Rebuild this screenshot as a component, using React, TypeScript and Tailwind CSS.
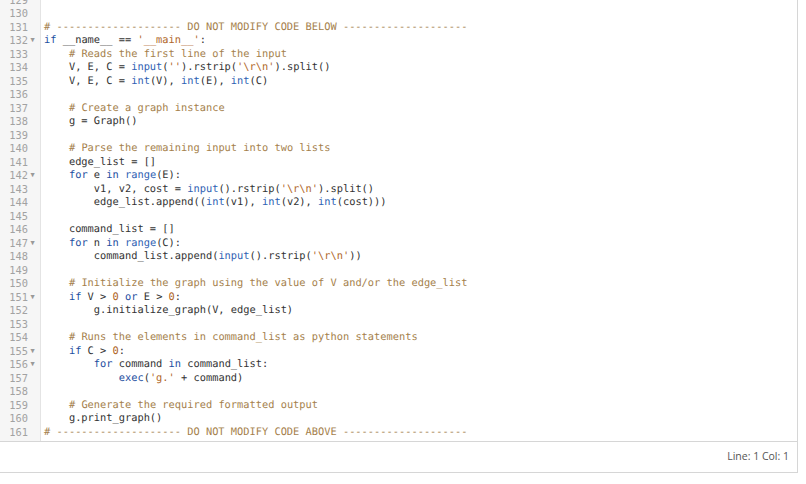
type Tok = [string, string];

const color: Record<string, string> = {
  t: 'text-[#333333]',
  c: 'text-[#a57f4c]',
  k: 'text-[#1d4ea0]',
  b: 'text-[#2f5fb3]',
  s: 'text-[#b0672a]',
  n: 'text-[#b0672a]',
};

const R = "'\\r\\n'";

const lines: { n: number; fold?: boolean; toks: Tok[] }[] = [
  { n: 129, toks: [] },
  { n: 130, toks: [] },
  { n: 131, toks: [['c', '# -------------------- DO NOT MODIFY CODE BELOW --------------------']] },
  { n: 132, fold: true, toks: [['k', 'if'], ['t', ' __name__ == '], ['s', "'__main__'"], ['t', ':']] },
  { n: 133, toks: [['t', '    '], ['c', '# Reads the first line of the input']] },
  { n: 134, toks: [['t', '    V, E, C = '], ['b', 'input'], ['t', '('], ['s', "''"], ['t', ').rstrip('], ['s', R], ['t', ').split()']] },
  { n: 135, toks: [['t', '    V, E, C = '], ['b', 'int'], ['t', '(V), '], ['b', 'int'], ['t', '(E), '], ['b', 'int'], ['t', '(C)']] },
  { n: 136, toks: [] },
  { n: 137, toks: [['t', '    '], ['c', '# Create a graph instance']] },
  { n: 138, toks: [['t', '    g = Graph()']] },
  { n: 139, toks: [] },
  { n: 140, toks: [['t', '    '], ['c', '# Parse the remaining input into two lists']] },
  { n: 141, toks: [['t', '    edge_list = []']] },
  { n: 142, fold: true, toks: [['t', '    '], ['k', 'for'], ['t', ' e '], ['k', 'in'], ['t', ' '], ['b', 'range'], ['t', '(E):']] },
  { n: 143, toks: [['t', '        v1, v2, cost = '], ['b', 'input'], ['t', '().rstrip('], ['s', R], ['t', ').split()']] },
  { n: 144, toks: [['t', '        edge_list.append(('], ['b', 'int'], ['t', '(v1), '], ['b', 'int'], ['t', '(v2), '], ['b', 'int'], ['t', '(cost)))']] },
  { n: 145, toks: [] },
  { n: 146, toks: [['t', '    command_list = []']] },
  { n: 147, fold: true, toks: [['t', '    '], ['k', 'for'], ['t', ' n '], ['k', 'in'], ['t', ' '], ['b', 'range'], ['t', '(C):']] },
  { n: 148, toks: [['t', '        command_list.append('], ['b', 'input'], ['t', '().rstrip('], ['s', R], ['t', '))']] },
  { n: 149, toks: [] },
  { n: 150, toks: [['t', '    '], ['c', '# Initialize the graph using the value of V and/or the edge_list']] },
  { n: 151, fold: true, toks: [['t', '    '], ['k', 'if'], ['t', ' V > '], ['n', '0'], ['t', ' '], ['k', 'or'], ['t', ' E > '], ['n', '0'], ['t', ':']] },
  { n: 152, toks: [['t', '        g.initialize_graph(V, edge_list)']] },
  { n: 153, toks: [] },
  { n: 154, toks: [['t', '    '], ['c', '# Runs the elements in command_list as python statements']] },
  { n: 155, fold: true, toks: [['t', '    '], ['k', 'if'], ['t', ' C > '], ['n', '0'], ['t', ':']] },
  { n: 156, fold: true, toks: [['t', '        '], ['k', 'for'], ['t', ' command '], ['k', 'in'], ['t', ' command_list:']] },
  { n: 157, toks: [['t', '            '], ['k', 'exec'], ['t', '('], ['s', "'g.'"], ['t', ' + command)']] },
  { n: 158, toks: [] },
  { n: 159, toks: [['t', '    '], ['c', '# Generate the required formatted output']] },
  { n: 160, toks: [['t', '    g.print_graph()']] },
  { n: 161, toks: [['c', '# -------------------- DO NOT MODIFY CODE ABOVE --------------------']] },
];

// alternate 14/13px rows so every row sits on whole pixels (avg 13.5px like the editor)
const rowH = (i: number) => (i % 2 === 0 ? 'h-[14px] leading-[14px]' : 'h-[13px] leading-[13px]');

export default function App() {
  return (
    <div className="w-[806px] h-[484px] bg-white overflow-hidden">
      <div className="w-[798px] border-r border-[#d6d6d6]">
        {/* editor */}
        <div className="h-[442px] overflow-hidden flex border-b border-[#d6d6d6] font-['DejaVu_Sans_Mono',monospace] text-[10.35px]">
          <div className="w-[41px] shrink-0 bg-[#f6f6f6] border-r border-[#e4e4e4]">
            <div className="mt-[-7px]">
              {lines.map((l, i) => (
                <div key={l.n} className={`${rowH(i)} flex justify-end pr-[3px] text-[#a2a2a2]`}>
                  <span>{l.n}</span>
                  <span className="w-[9px] text-center text-[7px] text-[#999999]">
                    {l.fold ? '▼' : ''}
                  </span>
                </div>
              ))}
            </div>
          </div>
          <div className="flex-1 pl-[3px]">
            <div className="mt-[-7px]">
              {lines.map((l, i) => (
                <div key={l.n} className={`${rowH(i)} whitespace-pre text-[#333333] [text-rendering:geometricPrecision]`}>
                  {l.toks.map(([k, s], j) => (
                    <span key={j} className={color[k]}>
                      {s}
                    </span>
                  ))}
                </div>
              ))}
            </div>
          </div>
        </div>
        {/* status bar */}
        <div className="h-[31px] flex items-center justify-end pr-[8px] border-b border-[#d6d6d6] font-['Open_Sans',sans-serif] text-[10.5px] text-[#555555]">
          Line: 1 Col: 1
        </div>
      </div>
    </div>
  );
}
